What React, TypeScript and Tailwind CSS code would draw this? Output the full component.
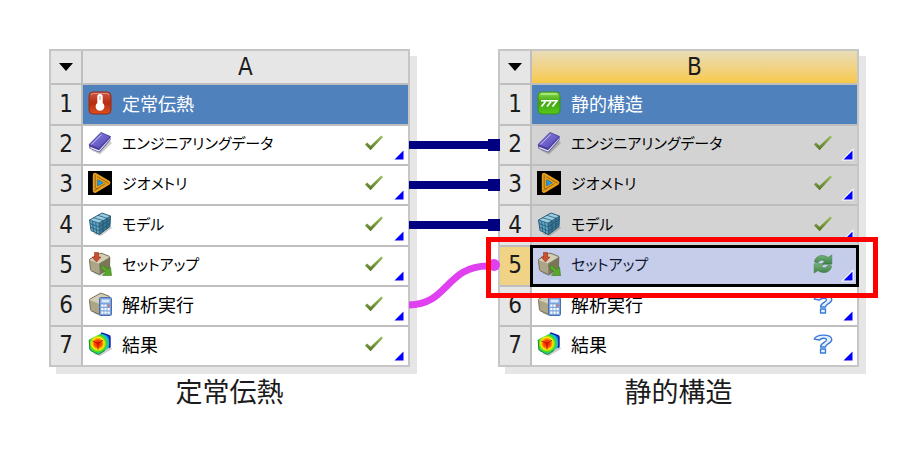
import React from "react"

type IconName = "thermal" | "structural" | "book" | "geometry" | "model" | "setup" | "solution" | "results"
type Status = "ok" | "refresh" | "unknown"

interface Row {
  icon: IconName
  label: string
  kana?: boolean
  status?: Status
  shaded?: boolean
  selected?: boolean
}

interface System {
  column: string
  name: string
  active?: boolean
  rows: Row[]
}

const systemA: System = {
  column: "A",
  name: "定常伝熱",
  rows: [
    { icon: "thermal", label: "定常伝熱" },
    { icon: "book", label: "エンジニアリングデータ", kana: true, status: "ok" },
    { icon: "geometry", label: "ジオメトリ", kana: true, status: "ok" },
    { icon: "model", label: "モデル", kana: true, status: "ok" },
    { icon: "setup", label: "セットアップ", kana: true, status: "ok" },
    { icon: "solution", label: "解析実行", status: "ok" },
    { icon: "results", label: "結果", status: "ok" },
  ],
}

const systemB: System = {
  column: "B",
  name: "静的構造",
  active: true,
  rows: [
    { icon: "structural", label: "静的構造" },
    { icon: "book", label: "エンジニアリングデータ", kana: true, status: "ok", shaded: true },
    { icon: "geometry", label: "ジオメトリ", kana: true, status: "ok", shaded: true },
    { icon: "model", label: "モデル", kana: true, status: "ok", shaded: true },
    { icon: "setup", label: "セットアップ", kana: true, status: "refresh", selected: true },
    { icon: "solution", label: "解析実行", status: "unknown" },
    { icon: "results", label: "結果", status: "unknown" },
  ],
}

function Gradients() {
  return (
    <svg className="absolute h-0 w-0" aria-hidden="true">
      <defs>
        <linearGradient id="gRed" x1="0" y1="0" x2="0" y2="1">
          <stop offset="0" stopColor="#cc5a44" />
          <stop offset="0.5" stopColor="#b82c10" />
          <stop offset="1" stopColor="#dc5020" />
        </linearGradient>
        <linearGradient id="gGreen" x1="0" y1="0" x2="0" y2="1">
          <stop offset="0" stopColor="#8fdc50" />
          <stop offset="0.45" stopColor="#3fa510" />
          <stop offset="1" stopColor="#55c81c" />
        </linearGradient>
        <linearGradient id="gBook" x1="0" y1="0" x2="1" y2="1">
          <stop offset="0" stopColor="#968ee0" />
          <stop offset="1" stopColor="#483ab0" />
        </linearGradient>
        <linearGradient id="gCheck" x1="0" y1="0" x2="0" y2="1">
          <stop offset="0" stopColor="#9cc060" />
          <stop offset="1" stopColor="#547420" />
        </linearGradient>
        <linearGradient id="gSync" x1="0" y1="0" x2="0" y2="1">
          <stop offset="0" stopColor="#76b27a" />
          <stop offset="1" stopColor="#3c8046" />
        </linearGradient>
        <radialGradient id="gHot" gradientUnits="userSpaceOnUse" cx="10" cy="11.5" r="13.5">
          <stop offset="0" stopColor="#e81000" />
          <stop offset="0.28" stopColor="#fc5800" />
          <stop offset="0.45" stopColor="#fcec00" />
          <stop offset="0.62" stopColor="#38d828" />
          <stop offset="0.76" stopColor="#18c8d8" />
          <stop offset="0.9" stopColor="#1058e8" />
          <stop offset="1" stopColor="#1018a0" />
        </radialGradient>
      </defs>
    </svg>
  )
}

function StoneBlock() {
  return (
    <g strokeLinejoin="round">
      <path d="M5 21 L12 24 L23 18 L21 13 Z" fill="#000" opacity="0.2" />
      <path d="M1.5 8.5 Q1 7.5 2 7 L12 1.5 Q13 1 14 1.4 L21 4.2 Q22 4.8 21 5.5 L11 11.5 Z" fill="#d4cfb4" />
      <path d="M1.5 8 L11 11.5 L11.5 22.5 L3.5 19 Q2.6 18.6 2.5 17.6 Z" fill="#aca588" />
      <path d="M11 11.5 L21.8 5 L21.5 15.5 Q21.5 16.5 20.6 17 L11.5 22.5 Z" fill="#7c7558" />
      <path
        d="M1.5 8.5 Q1 7.5 2 7 L12 1.5 Q13 1 14 1.4 L21 4.2 Q22 4.8 21.8 6 L21.5 15.5 Q21.5 16.5 20.6 17 L11.5 22.5 L3.5 19 Q2.6 18.6 2.5 17.6 Z"
        fill="none"
        stroke="#6a634a"
        strokeWidth="0.9"
      />
    </g>
  )
}

function CellIcon({ name }: { name: IconName }) {
  return (
    <svg viewBox="0 0 24 24" className="h-6 w-6 shrink-0" aria-hidden="true">
      {name === "thermal" && (
        <>
          <rect x="1" y="1" width="22" height="22" rx="4" fill="url(#gRed)" stroke="#962a16" />
          <path d="M3 4 Q3 2.5 5 2.5 H19 Q21 2.5 21 4" stroke="#e09080" fill="none" />
          <path d="M9.3 5.7 a2.7 2.7 0 0 1 5.4 0 V12 a4.4 4.4 0 1 1 -5.4 0 Z" fill="#fff" />
          <path d="M12 5 V9" stroke="#d08878" />
        </>
      )}
      {name === "structural" && (
        <>
          <rect x="1" y="1" width="22" height="22" rx="4" fill="url(#gGreen)" stroke="#3a9018" />
          <path d="M4 3 H20" stroke="#b4ec88" strokeWidth="1.5" />
          <path d="M4 9.8 H21" stroke="#fff" strokeWidth="1.6" />
          <path d="M8.5 10.5 L4.5 15.5 M14 10.5 L10 15.5 M19.5 10.5 L15.5 15.5" stroke="#fff" strokeWidth="1.8" />
        </>
      )}
      {name === "book" && (
        <>
          <path d="M3 19 L12 23.5 L24 12 L22 10 Z" fill="#000" opacity="0.2" />
          <path d="M1 14 L13 1.5 L22.5 5.5 L22.5 9 L11.5 21.5 L1.5 17.5 Z" fill="#483c9c" />
          <path d="M2.2 15.8 L11 19.2 L22 7.2 L22 8.6 L11.2 20.8 L2.2 17.2 Z" fill="#e8e6f2" />
          <path d="M1 13.5 L13 1.5 L22.5 5.5 L11 17.5 Z" fill="url(#gBook)" stroke="#453a9c" strokeWidth="0.7" />
          <path d="M3.5 13.5 L13.5 3.5" stroke="#bcb6f0" />
        </>
      )}
      {name === "geometry" && (
        <>
          <rect width="24" height="24" fill="#000" />
          <path d="M7.2 4.2 L20 11.8 L7.2 19.4 Z" fill="none" stroke="#e6a01e" strokeWidth="4.8" strokeLinejoin="round" />
          <path d="M7.2 3.5 V17 L10 18 M20.8 12.4 L9 5.6 M6 19.6 L17.5 12.6" fill="none" stroke="#7a4c04" strokeWidth="0.7" />
          <path d="M9.6 8.4 L15.4 11.8 L9.6 15.2 Z" fill="#1a9cec" />
        </>
      )}
      {name === "model" && (
        <>
          <path d="M5 22 L13 24 L24 16 L22 14 Z" fill="#000" opacity="0.2" />
          <path d="M1.5 8 L14 1 L22.5 4 L11 11 Z" fill="#9accE2" />
          <path d="M1.5 8 L11 11 L11.5 22.5 L3 18.5 Z" fill="#62a6c8" />
          <path d="M11 11 L22.5 4 L22 14.5 L11.5 22.5 Z" fill="#387694" />
          <g fill="none" stroke="#1e506c" strokeWidth="0.7" strokeLinejoin="round">
            <path d="M1.5 8 L14 1 L22.5 4 L22 14.5 L11.5 22.5 L3 18.5 Z" strokeWidth="0.9" />
            <path d="M1.5 8 L11 11 L22.5 4 M11 11 L11.5 22.5" />
            <path d="M2 11.5 L11 15 L22.5 7.5 M2.5 15 L11.3 19 L22.3 11" />
            <path d="M5.3 5.7 L15 8.5 V20 M9.7 3.3 L19 6.2 V17 M4.6 9 L5.8 20 M7.8 10 L8.6 21.5" />
          </g>
        </>
      )}
      {name === "setup" && (
        <>
          <StoneBlock />
          <path d="M6.5 0.5 H10.5 V5 H13 L8.5 10 L4 5 H6.5 Z" fill="#cc4e30" stroke="#943418" strokeWidth="0.6" />
          <path d="M12.5 15.5 L15 13 L19.5 17.5 L22.5 15 L23.5 23.5 L14.5 23.5 L17.2 20.2 Z" fill="#58a82c" stroke="#387818" strokeWidth="0.6" />
        </>
      )}
      {name === "solution" && (
        <>
          <StoneBlock />
          <rect x="11.5" y="5.5" width="12" height="18" rx="1.2" fill="#7ca4dc" stroke="#4870b0" />
          <rect x="13.5" y="7.5" width="8" height="3" fill="#dce8f8" />
          <g fill="#fff">
            <path d="M13.3 12.5 h2.2 v2.2 h-2.2z M16.4 12.5 h2.2 v2.2 h-2.2z M13.3 16 h2.2 v2.2 h-2.2z M16.4 16 h2.2 v2.2 h-2.2z M19.5 16 h2.2 v2.2 h-2.2z M13.3 19.5 h2.2 v2.2 h-2.2z M16.4 19.5 h2.2 v2.2 h-2.2z M19.5 19.5 h2.2 v2.2 h-2.2z" />
          </g>
          <path d="M19.5 12.5 h2.2 v2.2 h-2.2z" fill="#e07070" />
        </>
      )}
      {name === "results" && (
        <>
          <path d="M5 22 L12 24 L24 17 L22 13 Z" fill="#000" opacity="0.2" />
          <path
            d="M1 8.5 Q1 7.5 2 7 L13 1.5 Q14 1 15 1.3 L21 3.6 Q22 4 22 5 L22 14 Q22 15 21 15.6 L11.5 22 Q10.5 22.5 9.5 22 L3 18.8 Q2 18.3 1.8 17.3 Z"
            fill="url(#gHot)"
          />
          <path d="M1.2 8 L1.8 17.3 Q2 18.3 3 18.8 L9.5 22 Q10.5 22.5 11.5 22 L17 18.3" fill="none" stroke="#188830" />
          <path d="M13 1.5 Q14 1 15 1.3 L21 3.6 Q22 4 22 5 L22 14 Q22 15 21 15.6" fill="none" stroke="#101c98" strokeWidth="1.4" />
          <path d="M4.5 9 L10 11.5 L15 8.2 M10 11.5 V17.5" fill="none" stroke="#b81000" strokeWidth="0.9" />
        </>
      )}
    </svg>
  )
}

function StatusIcon({ status }: { status: Status }) {
  return (
    <svg viewBox="0 0 20 20" className="h-5 w-5 shrink-0" role="img" aria-label={status}>
      {status === "ok" && (
        <path d="M1 11.5 L3 9.5 L6.6 12.8 L17.2 2.5 L19 4 L6.6 17.2 Z" fill="url(#gCheck)" />
      )}
      {status === "refresh" && (
        <g fill="url(#gSync)" stroke="#3f7f48" strokeWidth="0.6">
          <path d="M1.5 8 C2 1.5 10 -0.5 15 3.5 L18.8 1 V10.2 H9 L11.5 7.2 C9 5.4 6 6 5 9 Z" />
          <path d="M18.5 12 C18 18.5 10 20.5 5 16.5 L1.2 19 V9.8 H11 L8.5 12.8 C11 14.6 14 14 15 11 Z" />
        </g>
      )}
      {status === "unknown" && (
        <g fill="#e4f0fc" stroke="#3878d8" strokeWidth="1.3" strokeLinejoin="round">
          <path d="M1.2 5.2 C3 0 18.8 -0.5 18.8 5.5 C18.8 9.8 12.5 9.5 12.5 13 H7.5 C7.5 8.5 13.5 8.5 13.5 5.8 C13.5 3.8 8.5 3.6 6.5 6 Z" />
          <rect x="7.5" y="15" width="5" height="4" />
        </g>
      )}
    </svg>
  )
}

function CornerMark() {
  return (
    <svg viewBox="0 0 10 10" className="h-2.5 w-2.5 shrink-0 self-end overflow-visible" aria-hidden="true">
      <path d="M9.5 0.5 V9.5 H0.5 Z" fill="#0000ff" stroke="#fff" strokeWidth="2" paintOrder="stroke" />
    </svg>
  )
}

function cellColor(row: Row, index: number) {
  if (index === 0) return "bg-[#4f81bd] text-white"
  if (row.selected) return "bg-[#c5cdea] text-[#111830]"
  if (row.shaded) return "bg-[#d3d3d3] text-black"
  return "bg-white text-black"
}

function SystemTable({ system }: { system: System }) {
  return (
    <table className="w-full table-fixed border-separate border-spacing-0 border-2 border-[#c6c6c6] shadow-[7px_7px_0_#e6e6e6]">
      <colgroup>
        <col className="w-8" />
        <col />
      </colgroup>
      <thead>
        <tr>
          <th className="border-r-2 border-b-2 border-[#bebebe] bg-[#e6e6e6] p-0">
            <button aria-label={`${system.column} menu`} className="flex h-8 w-full items-center justify-center">
              <svg viewBox="0 0 14 8" className="h-2 w-3.5" aria-hidden="true">
                <path d="M0 0 H14 L7 8 Z" fill="#000" />
              </svg>
            </button>
          </th>
          <th
            className={`border-b-2 border-[#bebebe] p-0 font-['DejaVu_Sans_Condensed','Noto_Sans',sans-serif] text-2xl leading-8 font-normal text-[#1c1c1c] ${
              system.active ? "bg-linear-to-b from-[#e9dcb6] to-[#f8c945]" : "bg-[#e6e6e6]"
            }`}
          >
            {system.column}
          </th>
        </tr>
      </thead>
      <tbody>
        {system.rows.map((row, i) => {
          const line = i < system.rows.length - 1 ? "border-b-2" : ""
          const height = i % 3 === 0 && i < 6 ? "h-[39px]" : "h-[38px]"
          return (
            <tr key={row.label}>
              <th
                scope="row"
                className={`border-r-2 border-[#bebebe] p-0 pb-0.5 text-center font-['DejaVu_Sans_Condensed','Noto_Sans',sans-serif] text-2xl leading-8 font-normal text-[#1c1c1c] ${line} ${
                  row.selected ? "bg-[#f0d385]" : "bg-[#e6e6e6]"
                }`}
              >
                {i + 1}
              </th>
              <td className={`border-[#bebebe] p-0 ${line} ${cellColor(row, i)}`}>
                <div
                  className={`flex items-center gap-2.5 pr-1 pb-1 pl-[5px] ${height} ${
                    row.selected ? "outline-3 -outline-offset-1 outline-black" : ""
                  }`}
                >
                  <CellIcon name={row.icon} />
                  <span className={`flex-1 leading-6 whitespace-nowrap ${row.kana ? "text-[15px]" : "text-lg"}`}>
                    {row.label}
                  </span>
                  {row.status && <StatusIcon status={row.status} />}
                  {row.status && <CornerMark />}
                </div>
              </td>
            </tr>
          )
        })}
      </tbody>
    </table>
  )
}

function SystemPanel({ system, children }: { system: System; children?: React.ReactNode }) {
  return (
    <section className="relative">
      <SystemTable system={system} />
      <h2 className="mt-1.5 text-center text-[27px] leading-9 text-[#1c1c1c]">{system.name}</h2>
      {children}
    </section>
  )
}

function Connections() {
  return (
    <svg viewBox="0 0 88 318" className="relative z-10 h-[318px] w-[88px] overflow-visible" aria-hidden="true">
      {[96, 136, 176].map((y) => (
        <g key={y} fill="#000080">
          <rect x="-1" y={y - 4} width="82" height="8" />
          <rect x="78" y={y - 6} width="12" height="12" />
        </g>
      ))}
      <path d="M-1 256 C38 256 36 217 78 217" fill="none" stroke="#e040f0" strokeWidth="7" />
      <circle cx="84" cy="216" r="6" fill="#e040f0" />
    </svg>
  )
}

export default function App() {
  return (
    <main className="grid min-h-screen grid-cols-[1fr_88px_1fr] bg-white pt-[49px] pr-[61px] pl-[49px] font-['Noto_Sans_CJK_JP',sans-serif] [font-feature-settings:'palt']">
      <Gradients />
      <SystemPanel system={systemA} />
      <Connections />
      <SystemPanel system={systemB}>
        {/* Frame around the setup cell */}
        <div className="absolute top-[188px] -right-[19px] -left-3 z-20 h-[61px] border-5 border-[#ff0000]" />
      </SystemPanel>
    </main>
  )
}
